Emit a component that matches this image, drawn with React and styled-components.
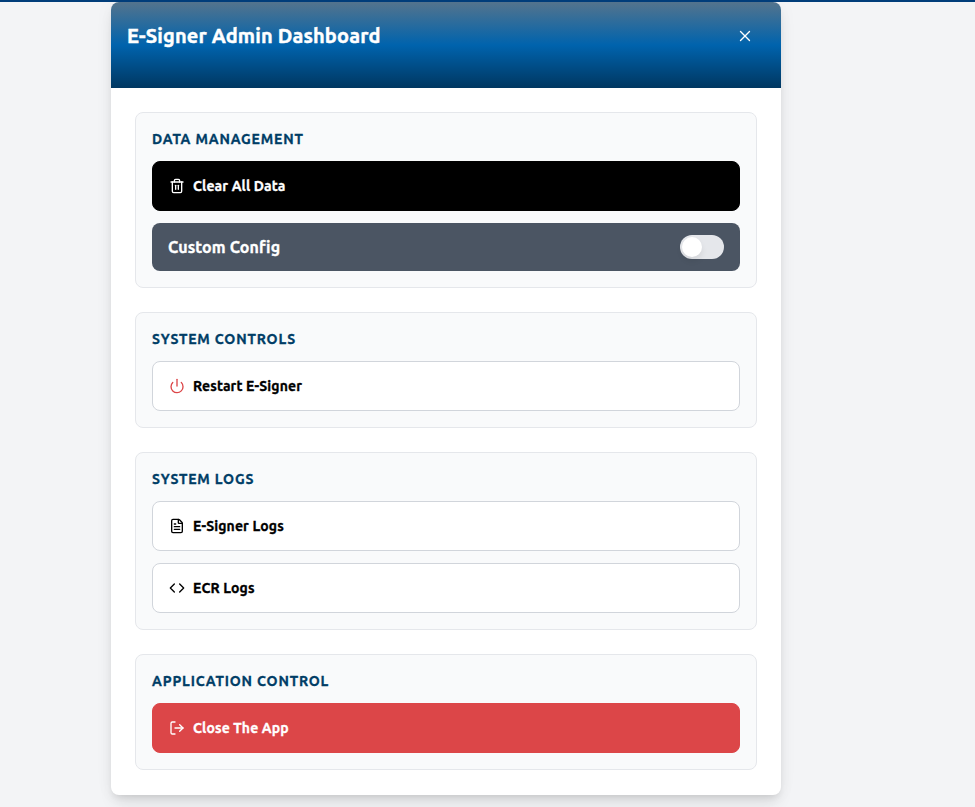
import React from 'react';
import styled, { createGlobalStyle, css } from 'styled-components';
import { Trash2, Power, FileText, Code, LogOut, X } from 'lucide-react';

const GlobalStyle = createGlobalStyle`
  * { box-sizing: border-box; }
  body {
    margin: 0;
    background: #f3f4f6;
    font-family: Ubuntu, 'Noto Sans', sans-serif;
    overflow: hidden;
  }
`;

const Page = styled.div`
  height: 807px;
  border-top: 2px solid #003d7a;
  padding-left: 111px;
  overflow: hidden;
`;

const Panel = styled.main`
  width: 670px;
  height: 793px;
  background: #fff;
  border-radius: 8px;
  overflow: hidden;
  box-shadow: 0 10px 15px -3px rgba(0, 0, 0, 0.1), 0 4px 6px -2px rgba(0, 0, 0, 0.08), 0 0 20px rgba(0, 0, 0, 0.04);
`;

const Header = styled.header`
  height: 86px;
  padding: 20px 27px 0 16px;
  display: flex;
  align-items: flex-start;
  justify-content: space-between;
  color: #fff;
  background: linear-gradient(180deg, #54748d 0%, #0063ad 50%, #003761 100%);
`;

const Title = styled.h1`
  margin: 0;
  font-size: 20px;
  line-height: 28px;
  font-weight: 700;
  letter-spacing: 0.15px;
  -webkit-text-stroke: 0.45px currentColor;
  white-space: nowrap;
`;

const CloseButton = styled.button`
  display: flex;
  margin: 5px 0 0;
  padding: 0;
  border: 0;
  background: none;
  color: #fff;
`;

const Content = styled.div`
  display: flex;
  flex-direction: column;
  gap: 24px;
  padding: 24px;
`;

const Section = styled.section`
  display: flex;
  flex-direction: column;
  gap: 12px;
  padding: 16px;
  border: 1px solid #e5e7eb;
  border-radius: 8px;
  background: #f9fafb;
`;

const SectionTitle = styled.h2`
  margin: 0;
  height: 20px;
  font-size: 14px;
  line-height: 20px;
  font-weight: 700;
  letter-spacing: 0.84px;
  -webkit-text-stroke: 0.3px currentColor;
  color: #003d66;
  white-space: nowrap;
`;

const tones = {
  dark: css`background: #000; border-color: #000; color: #fff;`,
  light: css`background: #fff; border-color: #d1d5db; color: #000;`,
  danger: css`background: #dc4648; border-color: #dc4648; color: #fff;`,
};

const Action = styled.button`
  display: flex;
  align-items: center;
  gap: 8px;
  width: 100%;
  height: 50px;
  padding: 0 16px;
  border: 1px solid;
  border-radius: 8px;
  font: 700 14px/20px Ubuntu, 'Noto Sans', sans-serif;
  text-align: left;
  ${({ $tone }) => tones[$tone]}
`;

const ActionLabel = styled.span`
  letter-spacing: 0.12px;
  -webkit-text-stroke: 0.3px currentColor;
  white-space: nowrap;
`;

const ConfigRow = styled.div`
  display: flex;
  align-items: center;
  justify-content: space-between;
  height: 48px;
  padding: 0 16px;
  border-radius: 8px;
  background: #4b5563;
  color: #fff;
`;

const ConfigLabel = styled.span`
  font-size: 16px;
  line-height: 24px;
  font-weight: 700;
  letter-spacing: 0.12px;
  -webkit-text-stroke: 0.35px currentColor;
`;

const Switch = styled.button`
  display: flex;
  align-items: center;
  width: 44px;
  height: 24px;
  padding: 0 2px;
  border: 0;
  border-radius: 12px;
  background: #e5e7eb;
`;

const Knob = styled.span`
  width: 20px;
  height: 20px;
  border-radius: 50%;
  background: #fff;
  box-shadow: 0 4px 6px rgba(0, 0, 0, 0.08);
`;

export default function App() {
  return (
    <>
      <GlobalStyle />
      <Page>
        <Panel>
          <Header>
            <Title>E-Signer Admin Dashboard</Title>
            <CloseButton aria-label="Close"><X size={18} strokeWidth={1.8} /></CloseButton>
          </Header>
          <Content>
            <Section>
              <SectionTitle>DATA MANAGEMENT</SectionTitle>
              <Action $tone="dark">
                <Trash2 size={16} />
                <ActionLabel>Clear All Data</ActionLabel>
              </Action>
              <ConfigRow>
                <ConfigLabel>Custom Config</ConfigLabel>
                <Switch role="switch" aria-checked="false" aria-label="Custom Config"><Knob /></Switch>
              </ConfigRow>
            </Section>
            <Section>
              <SectionTitle>SYSTEM CONTROLS</SectionTitle>
              <Action $tone="light">
                <Power size={16} color="#dc4648" />
                <ActionLabel>Restart E-Signer</ActionLabel>
              </Action>
            </Section>
            <Section>
              <SectionTitle>SYSTEM LOGS</SectionTitle>
              <Action $tone="light">
                <FileText size={16} />
                <ActionLabel>E-Signer Logs</ActionLabel>
              </Action>
              <Action $tone="light">
                <Code size={16} />
                <ActionLabel>ECR Logs</ActionLabel>
              </Action>
            </Section>
            <Section>
              <SectionTitle>APPLICATION CONTROL</SectionTitle>
              <Action $tone="danger">
                <LogOut size={16} />
                <ActionLabel>Close The App</ActionLabel>
              </Action>
            </Section>
          </Content>
        </Panel>
      </Page>
    </>
  );
}
